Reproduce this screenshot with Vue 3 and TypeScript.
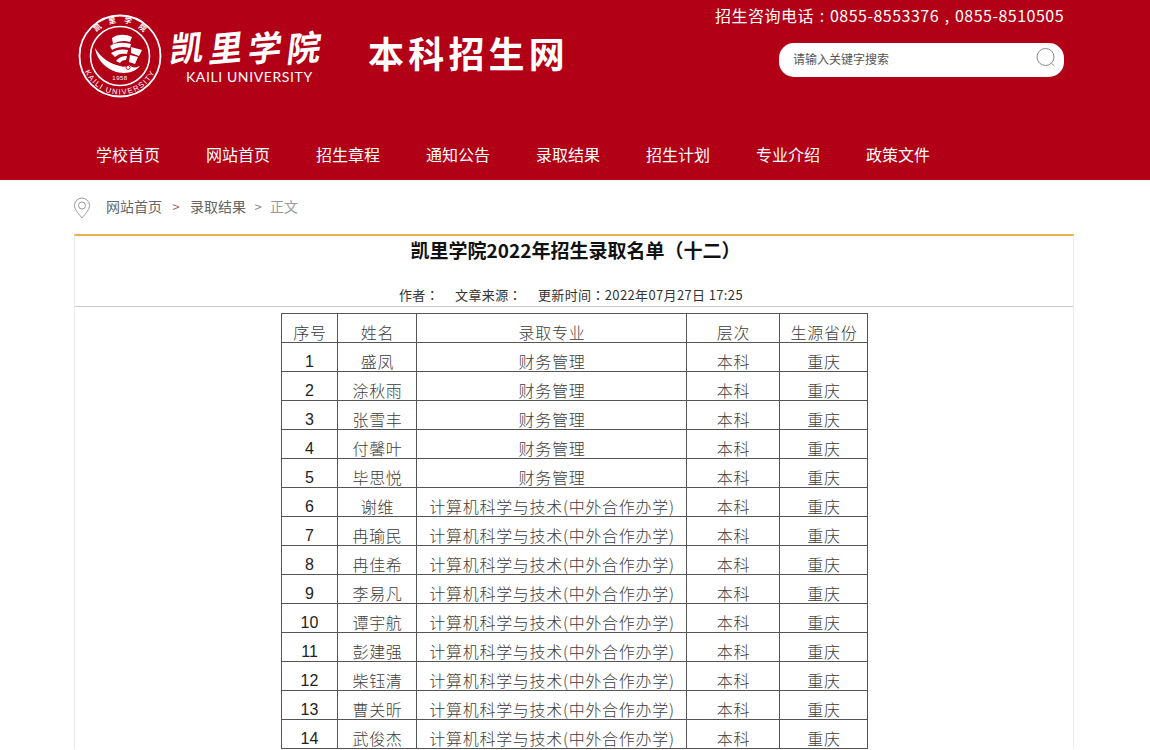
<script setup lang="ts">
const nav: string[] = ['学校首页', '网站首页', '招生章程', '通知公告', '录取结果', '招生计划', '专业介绍', '政策文件']
const cal: string[] = ['凯', '里', '学', '院']
const caf = '计算机科学与技术(中外合作办学)'
const rows: [string, string, string][] = [
  ['1', '盛凤', '财务管理'], ['2', '涂秋雨', '财务管理'], ['3', '张雪丰', '财务管理'],
  ['4', '付馨叶', '财务管理'], ['5', '毕思悦', '财务管理'], ['6', '谢维', caf],
  ['7', '冉瑜民', caf], ['8', '冉佳希', caf], ['9', '李易凡', caf], ['10', '谭宇航', caf],
  ['11', '彭建强', caf], ['12', '柴钰清', caf], ['13', '曹关昕', caf], ['14', '武俊杰', caf],
]
</script>

<template>
  <div class="page">
    <header class="header">
      <div class="top">
        <div class="brand">
          <svg class="seal" width="92" height="92" viewBox="0 0 92 92">
            <defs>
              <path id="arcTop" d="M12.500 46a33.500 33.500 0 0 1 67 0" />
              <path id="arcBottom" d="M7.500 46a38.500 38.500 0 0 0 77 0" />
            </defs>
            <circle cx="46" cy="46" r="40.500" fill="none" stroke="#fff" stroke-width="1.800" />
            <circle cx="46" cy="46" r="29.500" fill="none" stroke="#fff" stroke-width="1.600" />
            <text class="seal-top"><textPath href="#arcTop" startOffset="50%" text-anchor="middle">凯　里　学　院</textPath></text>
            <text class="seal-bottom"><textPath href="#arcBottom" startOffset="50%" text-anchor="middle">KAILI UNIVERSITY</textPath></text>
            <path d="M21 38C23 52 36 63 50 63C57 63 63 60 66 56C62 58 58 58 55 55C53 57 49 57 46 56C36 54 27 48 21 38Z" fill="#fff" />
            <path d="M38 28C44 24 51 24 58 27L56 32C50 30 44 31 39 34Z" fill="#fff" />
            <path d="M36 36C42 32 49 32 57 34L56 38C49 36 43 37 38 40Z" fill="#fff" />
            <path d="M37 43C43 39 49 39 54 40L53 44C48 43 44 44 41 47Z" fill="#fff" />
            <path d="M42 51C45 47 49 46 53 46L52 50C49 50 47 51 46 53Z" fill="#fff" />
            <path d="M57 37L68 40L65 46L57 43ZM56 45L64 47L61 54L55 52Z" fill="#fff" />
            <circle cx="54" cy="57.500" r="2" fill="none" stroke="#b20016" stroke-width=".8" />
            <text x="46" y="70" class="seal-year">1958</text>
          </svg>
          <div class="wordmark">
            <div class="calligraphy"><span v-for="c in cal" :key="c">{{ c }}</span></div>
            <div class="latin">KAILI UNIVERSITY</div>
          </div>
          <div class="site-title">本科招生网</div>
        </div>
        <div class="contact">
          <div class="phone">招生咨询电话<span class="sep">:</span>0855-8553376<span class="sep">,</span>0855-8510505</div>
          <div class="search">
            <span>请输入关键字搜索</span>
            <svg width="22" height="22" viewBox="0 0 22 22" fill="none" stroke="#8a8a8a" stroke-width="1">
              <circle cx="10.500" cy="10" r="8.500" />
              <path d="M16.500 16.500l3 2.500" />
            </svg>
          </div>
        </div>
      </div>
      <nav class="nav"><a v-for="n in nav" :key="n">{{ n }}</a></nav>
    </header>

    <main class="main">
      <div class="crumbs">
        <svg width="18" height="22" viewBox="0 0 18 22" fill="none" stroke="#9a9a9a" stroke-width="1">
          <path d="M9 21C5 16 1.500 12.500 1.500 8.500a7.500 7.500 0 0 1 15 0C16.500 12.500 13 16 9 21z" />
          <circle cx="9" cy="8.500" r="3.500" />
        </svg>
        <a>网站首页</a><i>&gt;</i><a>录取结果</a><i class="last">&gt;</i><em>正文</em>
      </div>

      <article class="card">
        <h1>凯里学院2022年招生录取名单<span class="tc">（</span>十二<span class="tc">）</span></h1>
        <div class="meta">
          <span>作者<span class="tc">：</span></span><span>文章来源<span class="tc">：</span></span><span>更新时间<span class="tc">：</span>2022年07月27日 17:25</span>
        </div>
        <div class="body">
          <table>
            <colgroup>
              <col class="c1" /><col class="c2" /><col class="c3" /><col class="c4" /><col class="c5" />
            </colgroup>
            <thead>
              <tr><th>序号</th><th>姓名</th><th>录取专业</th><th>层次</th><th>生源省份</th></tr>
            </thead>
            <tbody>
              <tr v-for="r in rows" :key="r[0]">
                <td class="num">{{ r[0] }}</td>
                <td>{{ r[1] }}</td>
                <td>{{ r[2] }}</td>
                <td>本科</td>
                <td>重庆</td>
              </tr>
            </tbody>
          </table>
        </div>
      </article>
    </main>
  </div>
</template>

<style>
html, body { margin: 0; height: 750px; overflow: hidden; background: #fff; }
</style>

<style scoped>
.page {
  height: 750px;
  overflow: hidden;
  font-family: "Noto Sans CJK SC", "Liberation Sans", sans-serif;
  color: #333;
}
.tc { font-family: "Noto Sans CJK TC", sans-serif; }
.header { height: 180px; background: #b20016; color: #fff; box-sizing: border-box; padding: 0 86px 0 74px; }
.top { height: 130px; display: flex; justify-content: space-between; }
.brand { display: flex; align-items: flex-start; padding-top: 10px; }
.seal { display: block; }
.seal-top { font-size: 7.500px; font-weight: 700; fill: #fff; }
.seal-bottom { font: 7.600px "Liberation Sans", sans-serif; fill: #fff; letter-spacing: 1.400px; }
.seal-year { font: 6px "Liberation Sans", sans-serif; fill: #fff; text-anchor: middle; letter-spacing: .5px; }
.wordmark { width: 152px; margin-left: 4px; padding-top: 16px; }
.calligraphy { display: flex; justify-content: space-between; height: 40px; font-size: 35px; line-height: 40px; font-weight: 700; }
.calligraphy span { display: block; transform: skewX(-12deg) rotate(-5deg) scaleX(.95); }
.latin { font: 14px/20px "Lato", "Liberation Sans", sans-serif; margin: 1px 0 0 16px; letter-spacing: .6px; white-space: nowrap; }
.site-title { margin: 18px 0 0 46px; font-size: 36px; line-height: 48px; font-weight: 700; letter-spacing: 4.200px; white-space: nowrap; }
.contact { width: 349px; display: flex; flex-direction: column; align-items: flex-end; }
.phone { font-size: 16px; line-height: 24px; margin-top: 3px; white-space: nowrap; letter-spacing: .48px; }
.sep { display: inline-block; width: 16px; text-align: center; letter-spacing: 0; }
.search {
  width: 285px; height: 34px; margin-top: 16px; border-radius: 15px; background: #fff;
  display: flex; align-items: center; justify-content: space-between; box-sizing: border-box;
  padding: 0 7px 0 15px; color: #555; font-size: 12px;
}
.search span { margin: -4px 0 0 -1px; }
.search svg { margin-top: -5px; }
.nav { height: 50px; display: flex; align-items: flex-start; gap: 46px; padding-left: 22px; font-size: 16px; line-height: 48px; white-space: nowrap; }
.nav a { width: 64px; }
.main { width: 1000px; margin-left: 74px; }
.crumbs { height: 54px; display: flex; align-items: center; font-size: 14px; color: #666; box-sizing: border-box; padding-bottom: 2px; }
.crumbs svg { margin: 4px 15px 0 -1px; flex: none; }
.crumbs i { font-style: normal; width: 28px; text-align: center; color: #a0675f; font-size: 13px; }
.crumbs i.last { width: 24px; color: #888; }
.crumbs em { font-style: normal; color: #999; }
.card { border-top: 2px solid #f0b04f; border-left: 1px solid #eaeaea; border-right: 1px solid #eaeaea; }
h1 { margin: -1px 0 0; font-size: 19px; line-height: 30px; font-weight: 700; color: #111; text-align: center; padding-left: 3px; }
.meta { height: 42px; box-sizing: border-box; padding: 20px 6px 0 0; border-bottom: 1px solid #ccc; display: flex; justify-content: center; gap: 16px; font-size: 13px; line-height: 20px; color: #333; letter-spacing: .36px; }
.body { padding: 6px 0 0 206px; }
table { width: 587px; table-layout: fixed; border-collapse: collapse; color: #3c3c3c; font-size: 16px; font-weight: 300; letter-spacing: .7px; }
.c1 { width: 56px; } .c2 { width: 79px; } .c3 { width: 270px; } .c4 { width: 93px; } .c5 { width: 88px; }
th, td { padding: 8px 0 0 1px; box-sizing: content-box; height: 20px; line-height: 20px; border: 1px solid #555; text-align: center; font-weight: 300; white-space: nowrap; }
td.num { font-family: "Liberation Sans", sans-serif; font-weight: 400; letter-spacing: 0; color: #222; padding: 10px 0 0; height: 18px; line-height: 18px; }
</style>
